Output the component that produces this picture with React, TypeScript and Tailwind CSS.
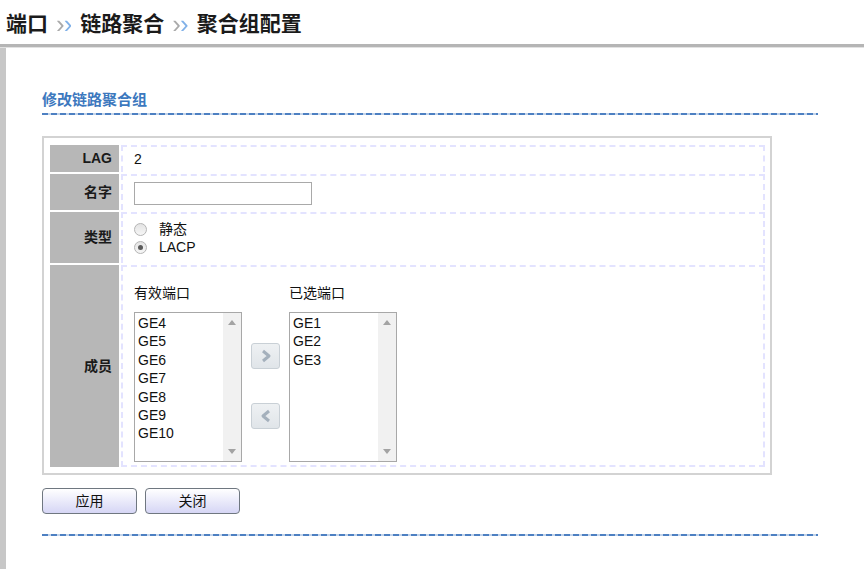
import React from 'react'

const font = "font-['Liberation_Sans','Noto_Sans_CJK_SC',sans-serif]"

function Chevrons() {
  return (
    <span className="ml-[8px] mr-[9px] inline-block bg-gradient-to-r from-[#a9a9a9] from-45% to-[#7fb0e8] to-55% bg-clip-text text-[26px] font-normal leading-[20px] tracking-[-1px] text-transparent">
      ››
    </span>
  )
}

function Radio({ checked }: { checked?: boolean }) {
  return (
    <span className="flex h-[13px] w-[13px] items-center justify-center rounded-full border border-[#b5b5b5] bg-gradient-to-b from-[#e4e4e4] to-[#f6f6f6]">
      {checked && <span className="h-[5px] w-[5px] rounded-full bg-[#5a5a5a]" />}
    </span>
  )
}

function ListBox({ items }: { items: string[] }) {
  return (
    <div className="flex h-[150px] w-[108px] border border-[#a8a8a8] bg-white">
      <div className="flex-1 pl-[3px] pt-[1px] text-[14px] leading-[18.4px] text-[#111]">
        {items.map((it) => (
          <div key={it}>{it}</div>
        ))}
      </div>
      <div className="flex w-[18px] flex-col items-center justify-between bg-[#f1f1f1] py-[7px]">
        <svg width="8" height="5" viewBox="0 0 8 5">
          <path d="M0 5 L4 0 L8 5 Z" fill="#a3a3a3" />
        </svg>
        <svg width="8" height="5" viewBox="0 0 8 5">
          <path d="M0 0 L8 0 L4 5 Z" fill="#a3a3a3" />
        </svg>
      </div>
    </div>
  )
}

function MoveButton({ dir }: { dir: 'right' | 'left' }) {
  return (
    <button
      type="button"
      className="flex h-[26px] w-[29px] items-center justify-center rounded-[3px] border border-[#c9d0d6] bg-gradient-to-b from-[#eef1f3] to-[#e0e5e9]"
    >
      <svg width="12" height="14" viewBox="0 0 12 14">
        {dir === 'right' ? (
          <path d="M3 2 L9 7 L3 12" fill="none" stroke="#a4b0bc" strokeWidth="3" strokeLinejoin="round" />
        ) : (
          <path d="M9 2 L3 7 L9 12" fill="none" stroke="#a4b0bc" strokeWidth="3" strokeLinejoin="round" />
        )}
      </svg>
    </button>
  )
}

function Label({ children }: { children: React.ReactNode }) {
  return (
    <div className="flex items-center justify-end bg-[#b7b7b7] pr-[7px] text-[14px] font-bold text-[#1a1a1a]">
      {children}
    </div>
  )
}

function BlueDash() {
  return (
    <div className="h-[2px] w-[776px] bg-[repeating-linear-gradient(90deg,#4d80c2_0_6px,#c3d4ea_6px_9px)]" />
  )
}

export default function App() {
  return (
    <div className={`h-[569px] w-[864px] overflow-hidden bg-white ${font}`}>
      {/* Breadcrumb */}
      <div className="flex h-[44px] items-center pl-[6px] pt-[3px] text-[21px] font-bold text-[#1b1b1b]">
        <span>端口</span>
        <Chevrons />
        <span>链路聚合</span>
        <Chevrons />
        <span>聚合组配置</span>
      </div>
      <div className="h-[3px] bg-[#b5b5b5]" />
      <div className="h-[1px] bg-[#e2e2e2]" />

      <div className="h-full border-l-[6px] border-[#c7c7c7] pl-[36px] pt-[42px]">
        <div className="pb-[3px] text-[15px] font-bold leading-[20px] text-[#3c78be]">修改链路聚合组</div>
        <BlueDash />

        {/* Form box */}
        <div className="mt-[21px] w-[730px] border-2 border-[#d3d3d3] pb-[6px] pl-[6px] pr-[5px] pt-[7px]">
          <div className="grid grid-cols-[69px_1fr] gap-x-[2px] gap-y-[2px]">
            <Label>LAG</Label>
            <div className="flex h-[27px] items-center border-x-2 border-t-2 border-dashed border-[#e3e3ff] pl-[11px] text-[14px] text-[#111]">
              2
            </div>

            <Label>名字</Label>
            <div className="flex h-[36px] items-center border-x-2 border-t-2 border-dashed border-[#e3e3ff] pl-[11px]">
              <input
                type="text"
                className="h-[23px] w-[178px] border border-[#a9a9a9] bg-white outline-none"
              />
            </div>

            <Label>类型</Label>
            <div className="flex h-[51px] flex-col justify-center border-x-2 border-t-2 border-dashed border-[#e3e3ff] pl-[11px] text-[14px] text-[#111]">
              <div className="flex h-[18px] items-center gap-[12px]">
                <Radio />
                <span>静态</span>
              </div>
              <div className="flex h-[18px] items-center gap-[12px]">
                <Radio checked />
                <span>LACP</span>
              </div>
            </div>

            <Label>成员</Label>
            <div className="h-[202px] border-2 border-dashed border-[#e3e3ff] pl-[11px] pt-[16px] text-[14px] text-[#111]">
              <div className="flex items-start">
                <div>
                  <div className="mb-[9px] leading-[20px]">有效端口</div>
                  <ListBox items={['GE4', 'GE5', 'GE6', 'GE7', 'GE8', 'GE9', 'GE10']} />
                </div>
                <div className="mx-[9px] mt-[60px] flex flex-col gap-[34px]">
                  <MoveButton dir="right" />
                  <MoveButton dir="left" />
                </div>
                <div>
                  <div className="mb-[9px] leading-[20px]">已选端口</div>
                  <ListBox items={['GE1', 'GE2', 'GE3']} />
                </div>
              </div>
            </div>
          </div>
        </div>

        {/* Actions */}
        <div className="mt-[13px] flex gap-[8px]">
          <button
            type="button"
            className="h-[26px] w-[95px] rounded-[4px] border border-[#6f7780] bg-gradient-to-b from-white to-[#d6d6f5] text-[14px] text-[#111]"
          >
            应用
          </button>
          <button
            type="button"
            className="h-[26px] w-[95px] rounded-[4px] border border-[#6f7780] bg-gradient-to-b from-white to-[#d6d6f5] text-[14px] text-[#111]"
          >
            关闭
          </button>
        </div>

        <div className="mt-[20px]">
          <BlueDash />
        </div>
      </div>
    </div>
  )
}
